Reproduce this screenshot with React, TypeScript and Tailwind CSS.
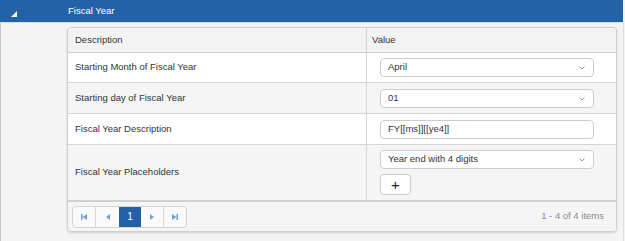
import React from 'react';

const font = { fontFamily: '"Liberation Sans", Arial, sans-serif' };

function Chevron() {
  return (
    <svg width="6" height="4" viewBox="0 0 6 4" className="absolute right-[8px] top-[7px]">
      <polyline points="0.5,0.5 3,3 5.5,0.5" fill="none" stroke="#9a9a9a" strokeWidth="1" />
    </svg>
  );
}

function Select({ value }: { value: string }) {
  return (
    <div className="relative w-[214px] h-[19px] bg-white border border-[#cccccc] rounded-[4px] pl-[7px] flex items-center text-[9.5px] text-[#333]">
      {value}
      <Chevron />
    </div>
  );
}

function PagerIcon({ kind }: { kind: 'first' | 'prev' | 'next' | 'last' }) {
  const c = '#6f9fd6';
  return (
    <svg width="8" height="8" viewBox="0 0 8 8">
      {kind === 'first' && (
        <>
          <rect x="1" y="1" width="1.5" height="6" fill={c} />
          <polygon points="7,1 7,7 2.5,4" fill={c} />
        </>
      )}
      {kind === 'prev' && <polygon points="6,1 6,7 2,4" fill={c} />}
      {kind === 'next' && <polygon points="2,1 2,7 6,4" fill={c} />}
      {kind === 'last' && (
        <>
          <polygon points="1,1 1,7 5.5,4" fill={c} />
          <rect x="5.5" y="1" width="1.5" height="6" fill={c} />
        </>
      )}
    </svg>
  );
}

export default function App() {
  const rows = [
    { label: 'Starting Month of Fiscal Year', h: 'h-[30px]', bg: 'bg-white' },
    { label: 'Starting day of Fiscal Year', h: 'h-[31px]', bg: 'bg-[#f5f5f5]' },
    { label: 'Fiscal Year Description', h: 'h-[31px]', bg: 'bg-white' },
  ];

  return (
    <div style={font} className="w-[625px] h-[241px] bg-[#f4f4f4] overflow-hidden">
      <div className="h-[23px] bg-[#2361a8] border-b border-[#dcdcdc] flex items-center mr-[2px]">
        <svg width="6" height="6" viewBox="0 0 6 6" className="ml-[11px] mt-[5px]">
          <polygon points="6,0 6,6 0,6" fill="#ffffff" />
        </svg>
        <span className="ml-[51px] text-white text-[9.5px]">Fiscal Year</span>
      </div>
      <div className="h-[218px] border-l border-[#c8c8c8] border-r border-r-[#dddddd] mr-[1px] pt-[4px]">
        <div className="ml-[66px] w-[550px] border border-[#cfcfcf] rounded-[4px] shadow-[0_1px_2px_rgba(0,0,0,0.15)] overflow-hidden text-[9.5px] text-[#333]">
          <div className="flex h-[25px] bg-[#f3f3f3] border-b border-[#cfcfcf]">
            <div className="w-[299px] pl-[7px] flex items-center border-r border-[#d5d5d5]">Description</div>
            <div className="flex-1 pl-[5px] flex items-center">Value</div>
          </div>
          {rows.map((r, i) => (
            <div key={r.label} className={`flex ${r.h} ${r.bg} border-b border-[#d5d5d5]`}>
              <div className="w-[299px] pl-[7px] flex items-center border-r border-[#d5d5d5]">{r.label}</div>
              <div className="flex-1 pl-[13px] flex items-center">
                {i === 0 && <Select value="April" />}
                {i === 1 && <Select value="01" />}
                {i === 2 && (
                  <div className="w-[214px] h-[19px] bg-white border border-[#cccccc] rounded-[4px] pl-[7px] flex items-center">
                    FY[[ms]][[ye4]]
                  </div>
                )}
              </div>
            </div>
          ))}
          <div className="flex h-[57px] bg-[#f5f5f5] border-b-2 border-[#d0d0d0]">
            <div className="w-[299px] pl-[7px] flex items-center border-r border-[#d5d5d5]">Fiscal Year Placeholders</div>
            <div className="flex-1 pl-[13px] pt-[5px] flex flex-col gap-[5px]">
              <Select value="Year end with 4 digits" />
              <div className="w-[31px] h-[21px] bg-white border border-[#cccccc] rounded-[4px] flex items-center justify-center text-[15px] leading-none text-[#222]">
                +
              </div>
            </div>
          </div>
          <div className="h-[29px] bg-[#f5f5f5] flex items-center pl-[4px] pr-[12px]">
            <div className="flex h-[22px] border border-[#d3d3d3] rounded-[4px] overflow-hidden bg-[#fafafa]">
              <div className="w-[23px] flex items-center justify-center border-r border-[#d8d8d8]"><PagerIcon kind="first" /></div>
              <div className="w-[23px] flex items-center justify-center"><PagerIcon kind="prev" /></div>
              <div className="w-[22px] flex items-center justify-center bg-[#2361a8] text-white text-[10px]">1</div>
              <div className="w-[23px] flex items-center justify-center border-r border-[#d8d8d8]"><PagerIcon kind="next" /></div>
              <div className="w-[22px] flex items-center justify-center"><PagerIcon kind="last" /></div>
            </div>
            <div className="ml-auto text-[#8a8a8a]">1 - 4 of 4 items</div>
          </div>
        </div>
      </div>
    </div>
  );
}
